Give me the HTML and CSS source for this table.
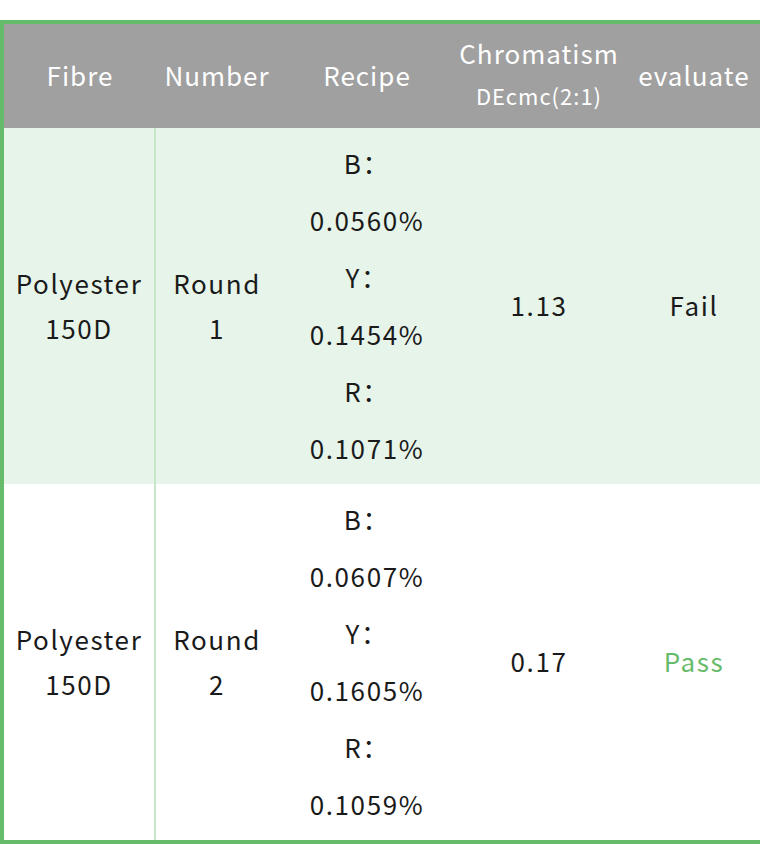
FILE: index.html
```html
<!DOCTYPE html>
<html>
<head>
<meta charset="utf-8">
<link rel="stylesheet" href="styles.css">
</head>
<body>
<div class="wrap">
  <table class="grid">
    <colgroup>
      <col class="c1"><col class="c2"><col class="c3"><col class="c4"><col class="c5">
    </colgroup>
    <thead>
      <tr>
        <th>Fibre</th>
        <th>Number</th>
        <th>Recipe</th>
        <th><div class="h-main">Chromatism</div><div class="h-sub">DEcmc(2:1)</div></th>
        <th>evaluate</th>
      </tr>
    </thead>
    <tbody>
      <tr class="odd">
        <td class="first">Polyester<br>150D</td>
        <td>Round<br>1</td>
        <td class="recipe"><div>B：</div><div>0.0560%</div><div>Y：</div><div>0.1454%</div><div>R：</div><div>0.1071%</div></td>
        <td>1.13</td>
        <td>Fail</td>
      </tr>
      <tr>
        <td class="first">Polyester<br>150D</td>
        <td>Round<br>2</td>
        <td class="recipe"><div>B：</div><div>0.0607%</div><div>Y：</div><div>0.1605%</div><div>R：</div><div>0.1059%</div></td>
        <td>0.17</td>
        <td class="pass">Pass</td>
      </tr>
    </tbody>
  </table>
</div>
</body>
</html>
```
FILE: styles.css
```css
html, body {
  margin: 0;
  padding: 0;
  background: #ffffff;
  overflow: hidden;
}
body {
  font-family: "Noto Sans CJK SC", "Noto Sans", sans-serif;
  color: #1a1a1a;
}
.wrap {
  padding-top: 20px;
  width: 766px;
}
.grid {
  width: 766px;
  border-collapse: separate;
  border-spacing: 0;
  border: 4px solid #66bb6a;
  table-layout: fixed;
  font-size: 26px;
}
.c1 { width: 152px; }
.c2 { width: 122px; }
.c3 { width: 178px; }
.c4 { width: 166px; }
.c5 { width: 144px; }
th {
  background: #a0a0a0;
  color: #ffffff;
  font-weight: 400;
  height: 102px;
  padding: 0 0 2px;
  text-align: center;
  vertical-align: middle;
  line-height: 36px;
  letter-spacing: 1px;
}
.h-main { line-height: 40px; }
.h-sub { font-size: 22px; line-height: 44px; letter-spacing: 1px; }
td {
  text-align: center;
  vertical-align: middle;
  padding: 0 0 3px;
  height: 353px;
  line-height: 45px;
  letter-spacing: 1.6px;
}
tr.odd td { background: #e6f4e9; }
td.first { border-right: 2px solid #c8e6c9; }
.recipe div { line-height: 57px; }
.pass { color: #66bb6a; }
```
